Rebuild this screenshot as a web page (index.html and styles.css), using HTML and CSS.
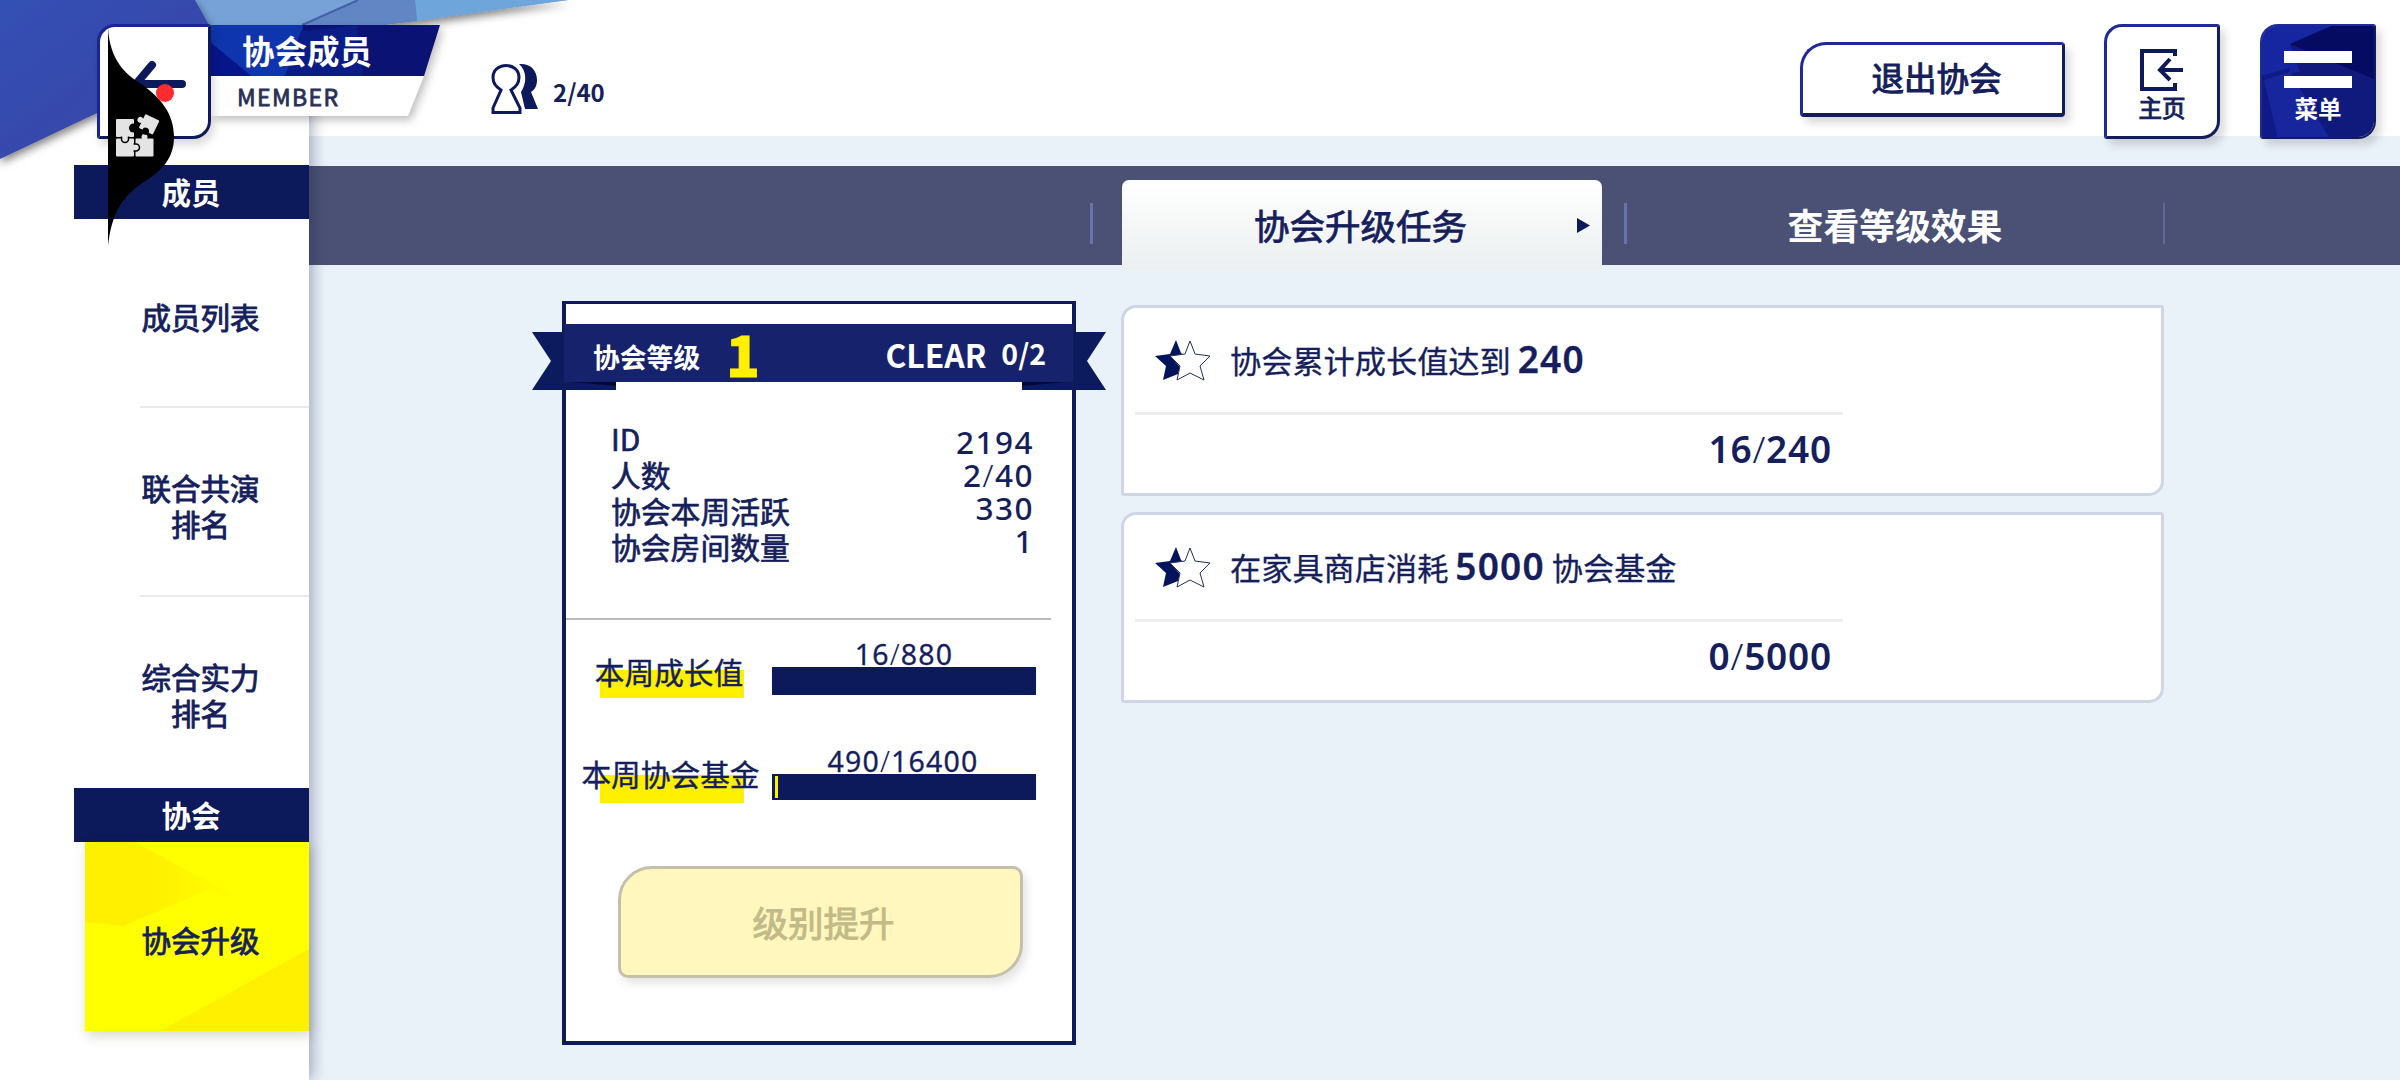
FILE: index.html
```
<!DOCTYPE html>
<html lang="zh-CN">
<head>
  <meta charset="UTF-8">
  <title>协会成员</title>
  <link rel="stylesheet" href="styles.css">
</head>
<body>
<div class="page">

  <svg class="backdrop" width="600" height="180" viewBox="0 0 600 180">
    <defs>
      <linearGradient id="sky" x1="0" x2="1">
        <stop offset="0" stop-color="#7fa9dc"/>
        <stop offset="0.6" stop-color="#6f9ad4"/>
        <stop offset="1" stop-color="#7d9fd8"/>
      </linearGradient>
      <linearGradient id="deep" x1="0" x2="1" y1="0" y2="1">
        <stop offset="0" stop-color="#3350b4"/>
        <stop offset="1" stop-color="#3a43a6"/>
      </linearGradient>
      <filter id="soft" x="-10%" y="-10%" width="120%" height="130%">
        <feDropShadow dx="1" dy="4" stdDeviation="4" flood-color="#000" flood-opacity="0.5"/>
      </filter>
    </defs>
    <polygon points="180,0 568,0 385,25 180,60" fill="url(#sky)" filter="url(#soft)"/>
    <polygon points="415,0 568,0 417,21" fill="#6ea5da"/>
    <polygon points="356,0 415,0 417,21 385,25 300,25" fill="#6285c4"/>
    <polygon points="195,0 358,0 302,25 209,25" fill="#76a2d8"/>
    <path d="M358 0L302 25" stroke="#2c3f8e" stroke-width="2" opacity=".6"/>
    <polygon points="0,0 195,0 209,25 209,60 0,159" fill="url(#deep)" filter="url(#soft)"/>
  </svg>

  <header class="header">
    <button class="back">
      <svg width="60" height="50" viewBox="0 0 60 50" fill="none" stroke="#0c1a5c" stroke-width="8" stroke-linecap="round"><path d="M8 27H54M8 27L24 8"/></svg>
    </button>
    <div class="title">
      <svg class="title-bg" width="232" height="100" viewBox="0 0 232 100">
        <polygon points="0,51 213,51 197,91 0,91" fill="#fff"/>
        <polygon points="0,0 229,0 213,51 0,51" fill="#0a1373"/>
        <polygon points="0,0 92,0 90,16 74,51 40,51 0,18" fill="#0f35ae"/>
        <polygon points="0,18 40,51 0,51" fill="#07158a"/>
        <polygon points="90,6 146,0 152,51 74,51" fill="#0a1c86"/>
      </svg>
      <h1>协会成员</h1>
      <span>MEMBER</span>
    </div>
    <div class="members">
      <svg width="48" height="52" viewBox="0 0 48 52">
        <path d="M28 1C39 0 46 7 46 17C46 24 43 27 40 29L47 46H34L30 29C36 20 36 8 28 1Z" fill="#0c1a5c"/>
        <path d="M10 27C5 24 2 20 2 14.500C2 7 8 2.500 15 2.500S28 7 28 14.500C28 20 25 24 20 27L29 45V49.500H2V45Z" fill="#fff" stroke="#0c1a5c" stroke-width="3"/>
      </svg>
      <b>2/40</b>
    </div>
    <button class="btn leave">退出协会</button>
    <button class="btn square home">
      <svg width="46" height="44" viewBox="0 0 46 44" fill="none" stroke="#0c1a5c" stroke-width="4"><path d="M36 8V3H3V41H36V35M44 22H21M31 11L21 22L31 32"/></svg>
      主页
    </button>
    <button class="btn square menu">
      <svg class="menu-bg" width="116" height="115" viewBox="0 0 116 115" preserveAspectRatio="none">
        <rect width="116" height="115" fill="#10197c"/>
        <polygon points="0,0 76,0 30,20 40,48 0,52" fill="#1626a0"/>
        <polygon points="76,0 116,0 116,56 30,20" fill="#060b62"/>
        <polygon points="0,52 30,44 18,115 0,115" fill="#0f1a86"/>
        <polygon points="4,56 30,48 70,115 18,115" fill="#17269c"/>
      </svg>
      <i></i><i></i>
      <span>菜单</span>
    </button>
  </header>

  <nav class="sidebar">
    <h2>成员</h2>
    <a>成员列表</a>
    <a>联合共演<br>排名</a>
    <a>综合实力<br>排名</a>
    <h2>协会</h2>
    <a class="current">
      <svg width="224" height="189" viewBox="0 0 224 189">
        <defs>
          <linearGradient id="fade">
            <stop offset="0.4" stop-color="#fff000"/>
            <stop offset="1" stop-color="#ff0"/>
          </linearGradient>
        </defs>
        <polygon points="0,0 50,0 160,60 124,48 38,84 0,80" fill="url(#fade)"/>
        <polygon points="224,107 224,189 75,189" fill="#fff000"/>
      </svg>
      <span>协会升级</span>
    </a>
  </nav>

  <main class="main">
    <div class="tabs">
      <div class="tab-line"></div>
      <div class="tab active">协会升级任务<svg width="13" height="15"><path d="M0 0L13 7.500L0 15Z" fill="#0c1a5c"/></svg></div>
      <div class="tab-line"></div>
      <div class="tab">查看等级效果</div>
      <div class="tab-line faint"></div>
    </div>

    <div class="content">
      <section class="card">
        <div class="ribbon">
          <svg width="574" height="66" viewBox="0 0 574 66">
            <path d="M0 8H84V66H0L19 37Z" fill="#0c1a5e"/>
            <path d="M574 8H490V66H574L555 37Z" fill="#0c1a5e"/>
            <path d="M40 58H84V62Z M534 58H490V62Z" fill="#040934"/>
            <rect x="32" y="0" width="509" height="58" fill="#16226b"/>
          </svg>
          <span class="level">协会等级</span>
          <strong>1</strong>
          <span class="clear">CLEAR</span>
          <span class="count">0/2</span>
        </div>

        <div class="info">
          <div class="labels">
            <p>ID</p>
            <p>人数</p>
            <p>协会本周活跃</p>
            <p>协会房间数量</p>
          </div>
          <div class="values">
            <p>2194</p>
            <p>2<em>/</em>40</p>
            <p>330</p>
            <p>1</p>
          </div>
        </div>

        <div class="progress">
          <div class="name"><span>本周成长值</span></div>
          <div class="meter">
            <p>16<em>/</em>880</p>
            <div class="bar"></div>
          </div>
        </div>
        <div class="progress">
          <div class="name"><span>本周协会基金</span></div>
          <div class="meter">
            <p>490<em>/</em>16400</p>
            <div class="bar"><div class="fill" style="width:3px"></div></div>
          </div>
        </div>

        <button class="upgrade">级别提升</button>
      </section>

      <section class="tasks">
        <div class="task">
          <div class="task-name">
            <svg width="57" height="41" viewBox="0 0 57 41">
              <path d="M21 0L26 13L30 16L16 17L25 27L23 34L8 40L11 26L0 16L15 14Z" fill="#04145c"/>
              <path d="M35 1L40 14L55 16L45 26L49 40L35 33L22 40L25 26L15 16L30 14Z" fill="#fff" stroke="#26304f" stroke-width="1"/>
            </svg>
            <span>协会累计成长值达到 <b>240</b></span>
          </div>
          <p class="task-value">16<em>/</em>240</p>
        </div>
        <div class="task">
          <div class="task-name">
            <svg width="57" height="41" viewBox="0 0 57 41">
              <path d="M21 0L26 13L30 16L16 17L25 27L23 34L8 40L11 26L0 16L15 14Z" fill="#04145c"/>
              <path d="M35 1L40 14L55 16L45 26L49 40L35 33L22 40L25 26L15 16L30 14Z" fill="#fff" stroke="#26304f" stroke-width="1"/>
            </svg>
            <span>在家具商店消耗 <b>5000</b> 协会基金</span>
          </div>
          <p class="task-value">0<em>/</em>5000</p>
        </div>
      </section>
    </div>
  </main>

  <!-- floating game assistant handle -->
  <svg class="assistant" width="70" height="218" viewBox="0 0 70 218">
    <path d="M0 0C2 32 17 46 33 56C52 69 66 85 66 109C66 132 52 144 33 156C14 169 3 187 0 218Z" fill="#000"/>
    <circle cx="57" cy="65" r="9" fill="#fb2c2f"/>
    <g fill="#e4e4e4">
      <rect x="8" y="91" width="18" height="18" rx="1"/>
      <rect x="8" y="110.500" width="18" height="18" rx="1"/>
      <rect x="27.500" y="110.500" width="18" height="18" rx="1"/>
      <path d="M13.500 108.500V111A3.500 3.500 0 0 0 20.500 111V108.500" stroke="#000" stroke-width="1.500"/>
      <path d="M25.500 116H28A3.500 3.500 0 0 1 28 123H25.500" stroke="#000" stroke-width="1.500"/>
      <circle cx="36.500" cy="109" r="3"/>
      <circle cx="25.500" cy="100" r="4.500" fill="#000"/>
      <g transform="rotate(26 41 96)">
        <rect x="33.500" y="88.500" width="15.500" height="15.500" rx="1"/>
        <circle cx="31.500" cy="96" r="3"/>
        <circle cx="41" cy="104" r="3.500" fill="#000"/>
      </g>
    </g>
  </svg>

</div>
</body>
</html>
```

FILE: styles.css
```
* {
  box-sizing: border-box;
}
body {
  margin: 0;
  font-family: "Noto Sans CJK SC", sans-serif;
  color: #161f5c;
}
h1, h2, p {
  margin: 0;
}
em {
  font-style: normal;
  font-weight: 300;
  -webkit-text-stroke: 0;
}
button {
  font-family: inherit;
  color: inherit;
  padding: 0;
}
svg {
  display: block;
  flex: none;
}
.page {
  position: relative;
  display: grid;
  grid-template-columns: 309px 1fr;
  grid-template-rows: 136px 1fr;
  width: 2400px;
  height: 1080px;
  overflow: hidden;
  background: linear-gradient(#fff 136px, #e9f1f9 136px);
}
.backdrop {
  position: absolute;
  left: 0;
  top: 0;
  z-index: 2;
}

/* header */
.header {
  grid-column: 1 / 3;
  grid-row: 1;
  z-index: 3;
  display: flex;
  align-items: flex-start;
  padding: 24px 24px 0 97px;
}
.back {
  display: flex;
  width: 114px;
  height: 115px;
  padding: 30px 0 0 28px;
  border: 3px solid #1a2590;
  border-right-color: #10195c;
  border-bottom-color: #10195c;
  border-radius: 18px 3px 18px 3px;
  background: #fff;
  box-shadow: 3px 6px 8px rgba(0, 0, 0, 0.15);
}
.title {
  position: relative;
  width: 232px;
  padding: 0 0 0 31px;
}
.title-bg {
  position: absolute;
  left: 0;
  top: 1px;
  z-index: -1;
  filter: drop-shadow(3px 4px 4px rgba(0, 0, 0, 0.25));
}
.title h1 {
  color: #fff;
  font-size: 32.500px;
  line-height: 51px;
  font-weight: bold;
}
.title span {
  display: block;
  margin: 2px 0 0 -5px;
  font-size: 23px;
  line-height: 38px;
  letter-spacing: 1.400px;
  color: #2a2f55;
  -webkit-text-stroke: 0.800px;
}
.members {
  display: flex;
  margin: 39px 0 0 48px;
  gap: 14px;
}
.members b {
  font-size: 24px;
  line-height: 57px;
}
.btn {
  border: 3px solid #1f2a98;
  border-right-color: #131c5e;
  border-bottom-color: #131c5e;
  background: #fff;
  box-shadow: 5px 6px 8px rgba(0, 0, 0, 0.15);
}
.leave {
  width: 265px;
  height: 75px;
  margin: 18px 0 0 auto;
  padding: 0 0 5px 8px;
  border-bottom-width: 4px;
  border-radius: 26px 4px 4px 4px;
  font-size: 32.500px;
  line-height: 62px;
  -webkit-text-stroke: 1.100px;
}
.square {
  display: flex;
  flex-direction: column;
  align-items: center;
  width: 116px;
  height: 115px;
  margin-left: 39px;
  border-radius: 18px 3px 18px 3px;
  font-size: 23.500px;
  line-height: 30px;
}
.home {
  padding-top: 21px;
  -webkit-text-stroke: 1px;
}
.menu {
  position: relative;
  overflow: hidden;
  margin-left: 40px;
  padding-top: 25px;
  border-width: 2px;
  color: #fff;
  font-weight: bold;
}
.menu-bg {
  position: absolute;
  left: -2px;
  top: -2px;
}
.menu i {
  position: relative;
  width: 68px;
  height: 12px;
  margin-bottom: 13px;
  background: #fff;
}
.menu span {
  position: relative;
  margin-top: -8px;
}

/* sidebar */
.sidebar {
  grid-column: 1;
  grid-row: 1 / 3;
  z-index: 1;
  display: flex;
  flex-direction: column;
  align-items: flex-end;
  padding-top: 165px;
  background: #fff;
  box-shadow: 3px 0 14px rgba(20, 30, 70, 0.35);
}
.sidebar h2 {
  width: 235px;
  height: 54px;
  padding-right: 1px;
  background: #0c1a5c;
  color: #fff;
  font-size: 29.500px;
  line-height: 53px;
  text-align: center;
}
.sidebar a {
  display: flex;
  align-items: center;
  justify-content: center;
  width: 169px;
  height: 189px;
  padding: 6px 48px 0 0;
  border-bottom: 2px solid #eaeaea;
  font-size: 29.500px;
  line-height: 36px;
  text-align: center;
  white-space: nowrap;
  -webkit-text-stroke: 0.900px;
}
.sidebar a:nth-of-type(3) {
  height: 191px;
  padding-top: 2px;
  border: 0;
}
.sidebar .current {
  position: relative;
  width: 224px;
  border: 0;
  padding: 4px 48px 0 55px;
  background: #ff0;
  box-shadow: 2px 5px 12px rgba(60, 60, 0, 0.2);
}
.current svg {
  position: absolute;
  left: 0;
  top: 0;
}
.current span {
  position: relative;
}

/* tabs */
.main {
  grid-column: 2;
  grid-row: 2;
  padding-top: 30px;
}
.tabs {
  display: flex;
  height: 99px;
  padding-left: 781px;
  background: #4b5175;
}
.tab-line {
  width: 3px;
  height: 41px;
  margin-top: 37px;
  background: #6873ae;
}
.tab-line.faint {
  width: 2px;
  background: #60689a;
}
.tab {
  width: 480px;
  height: 90px;
  margin: 14px 22px 0 29px;
  color: #fff;
  font-size: 35.800px;
  line-height: 88px;
  font-weight: bold;
  text-align: center;
}
.tab:nth-child(4) {
  margin: 14px 28px 0 28px;
}
.tab.active {
  display: flex;
  align-items: center;
  justify-content: flex-end;
  gap: 110px;
  padding-right: 12px;
  border-radius: 7px 7px 0 0;
  background: linear-gradient(#fff, #ebefef);
  color: #161f5c;
  font-size: 35.500px;
  font-weight: normal;
  -webkit-text-stroke: 0.800px;
}

/* level card */
.content {
  display: flex;
  align-items: flex-start;
  gap: 45px;
  padding: 36px 0 0 253px;
}
.card {
  display: flex;
  flex-direction: column;
  width: 514px;
  height: 744px;
  border: 4px solid #101a5a;
  border-top-width: 3px;
  background: #fff;
}
.ribbon {
  position: relative;
  display: flex;
  align-items: center;
  height: 58px;
  margin-top: 20px;
  padding: 0 26px 0 27px;
  color: #fff;
  font-weight: bold;
}
.ribbon svg {
  position: absolute;
  left: -34px;
  top: 0;
}
.ribbon span, .ribbon strong {
  position: relative;
  line-height: 58px;
}
.level {
  font-size: 26.800px;
  padding-top: 8px;
}
.ribbon strong {
  margin-left: 26px;
  color: #fff000;
  font-size: 55px;
  font-weight: 900;
  -webkit-text-stroke: 1px #fff000;
}
.clear {
  margin-left: auto;
  padding-top: 2px;
  font-size: 31.800px;
}
.count {
  margin-left: 15px;
  font-size: 28.500px;
}
.info {
  display: flex;
  justify-content: space-between;
  height: 236px;
  padding: 38px 38px 0 45px;
}
.labels {
  font-size: 29.800px;
  line-height: 36px;
  -webkit-text-stroke: 0.700px;
}
.values {
  padding-top: 5px;
  font-family: "Noto Sans", "Noto Sans CJK SC", sans-serif;
  font-size: 31.500px;
  line-height: 33px;
  font-weight: 500;
  letter-spacing: 1.500px;
  text-align: right;
}
.progress {
  display: flex;
  align-items: flex-end;
  height: 77px;
  margin-right: 21px;
  padding-right: 14px;
  border-top: 2px solid #bbb;
}
.progress + .progress {
  height: 105px;
  border: 0;
}
.name {
  display: flex;
  justify-content: center;
  align-items: flex-start;
  width: 144px;
  height: 28px;
  margin: 0 28px -3px 34px;
  background: #fff000;
  font-size: 29.700px;
  line-height: 40px;
  white-space: nowrap;
  -webkit-text-stroke: 0.400px;
}
.name span {
  margin: -18px 6px 0 0;
}
.progress + .progress .name span {
  margin: -21px 3px 0 0;
}
.meter {
  width: 264px;
}
.meter p {
  height: 29px;
  font-family: "Noto Sans", sans-serif;
  font-size: 28.500px;
  line-height: 33px;
  letter-spacing: 1.200px;
  text-align: center;
  -webkit-text-stroke: 0.300px;
}
.bar {
  height: 28px;
  padding: 2px 3px;
  background: #0c1a5c;
}
.progress + .progress .meter p {
  margin-left: -2px;
}
.progress + .progress .bar {
  height: 26px;
}
.fill {
  height: 100%;
  background: #fff000;
}
.upgrade {
  width: 405px;
  height: 112px;
  margin: 66px 0 0 52px;
  padding-left: 6px;
  border: 3px solid #c4c0ab;
  border-radius: 34px 10px 34px 10px;
  background: #fff7bd;
  box-shadow: 4px 6px 8px rgba(0, 0, 0, 0.1);
  color: #c2ba88;
  font-size: 35.500px;
  line-height: 104px;
  -webkit-text-stroke: 1px;
}

/* tasks */
.tasks {
  display: flex;
  flex-direction: column;
  gap: 16px;
  padding-top: 4px;
}
.task {
  width: 1043px;
  height: 191px;
  border: 3px solid #d0d5e6;
  border-radius: 15px 3px 15px 3px;
  background: #fff;
}
.task-name {
  display: flex;
  align-items: center;
  gap: 18px;
  width: 708px;
  height: 107px;
  margin-left: 11px;
  padding-left: 20px;
  border-bottom: 3px solid #eee;
  font-size: 31.200px;
  -webkit-text-stroke: 0.300px;
}
.task-name span {
  padding-bottom: 3px;
}
.task-name b {
  font-family: "Noto Sans", sans-serif;
  font-size: 37px;
  font-weight: 600;
  letter-spacing: 1.200px;
}
.task-value {
  width: 708px;
  font-family: "Noto Sans", sans-serif;
  font-size: 37px;
  line-height: 67px;
  font-weight: 600;
  letter-spacing: 0.800px;
  text-align: right;
}

.assistant {
  position: absolute;
  left: 108px;
  top: 28px;
  z-index: 4;
}
```
